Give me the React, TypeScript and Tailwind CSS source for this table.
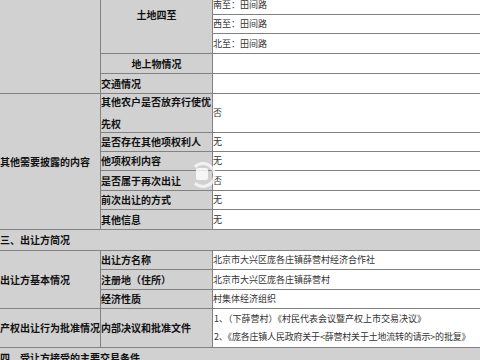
import { Fragment } from 'react'

const gray = 'bg-[#d1d1d1]'
const label = `${gray} flex items-center text-[10px] font-bold leading-[22px] text-[#111]`
const value = 'bg-white flex items-center whitespace-nowrap text-[9px] text-[#333]'

interface Row {
  label: string
  value: string
}

const bounds: string[] = ['东至：田间路', '南至：田间路', '西至：田间路', '北至：田间路']

const disclosure: Row[] = [
  { label: '其他农户是否放弃行使优先权', value: '否' },
  { label: '是否存在其他项权利人', value: '无' },
  { label: '他项权利内容', value: '无' },
  { label: '是否属于再次出让', value: '否' },
  { label: '前次出让的方式', value: '无' },
  { label: '其他信息', value: '无' },
]

const seller: Row[] = [
  { label: '出让方名称', value: '北京市大兴区庞各庄镇薛营村经济合作社' },
  { label: '注册地（住所）', value: '北京市大兴区庞各庄镇薛营村' },
  { label: '经济性质', value: '村集体经济组织' },
]

export default function App() {
  return (
    <div
      className="relative h-[360px] w-[480px] overflow-hidden bg-white"
      style={{ fontFamily: '"Noto Sans CJK SC", "Noto Sans", sans-serif' }}
    >
      <div className="-mt-[24px] grid grid-cols-[100px_111px_1fr] grid-rows-[19px_18px_18px_19px_19px_19px_38px_18px_18px_19px_18px_19px_20px_18px_19px_18px_38px_19px] gap-px bg-[#828282]">
        {/* land section, its label sits above the crop */}
        <div className={`${gray} row-span-6`} />
        <div className={`${label} row-span-4 justify-center`}>土地四至</div>
        {bounds.map((b) => (
          <div key={b} className={value}>
            {b}
          </div>
        ))}
        <div className={`${label} justify-center`}>地上物情况</div>
        <div className="bg-white" />
        <div className={label}>交通情况</div>
        <div className="bg-white" />

        <div className={`${label} row-span-6`}>其他需要披露的内容</div>
        {disclosure.map((r) => (
          <Fragment key={r.label}>
            <div className={label}>
              <span>{r.label}</span>
            </div>
            <div className={value}>{r.value}</div>
          </Fragment>
        ))}

        <div className={`${label} col-span-3`}>三、出让方简况</div>
        <div className={`${label} row-span-3`}>出让方基本情况</div>
        {seller.map((r) => (
          <Fragment key={r.label}>
            <div className={label}>{r.label}</div>
            <div className={value}>{r.value}</div>
          </Fragment>
        ))}

        <div className={`${label} whitespace-nowrap`}>产权出让行为批准情况</div>
        <div className={label}>内部决议和批准文件</div>
        <div className="flex flex-col justify-center gap-[6px] whitespace-nowrap bg-white pl-px text-[9px] leading-[12px] text-[#333]">
          <span>1、（下薛营村）《村民代表会议暨产权上市交易决议》</span>
          <span className="tracking-[-0.2px]">2、《庞各庄镇人民政府关于&lt;薛营村关于土地流转的请示&gt;的批复》</span>
        </div>

        <div className={`${label} col-span-3`}>四、受让方接受的主要交易条件</div>
      </div>

      {/* faint watermark */}
      <div className="pointer-events-none absolute left-[190px] top-[162px] h-[26px] w-[26px] rounded-full border-[3px] border-white/70 border-l-transparent" />
      <div className="pointer-events-none absolute left-[196px] top-[168px] h-[12px] w-[12px] rounded-[2px] bg-white/80" />
    </div>
  )
}
